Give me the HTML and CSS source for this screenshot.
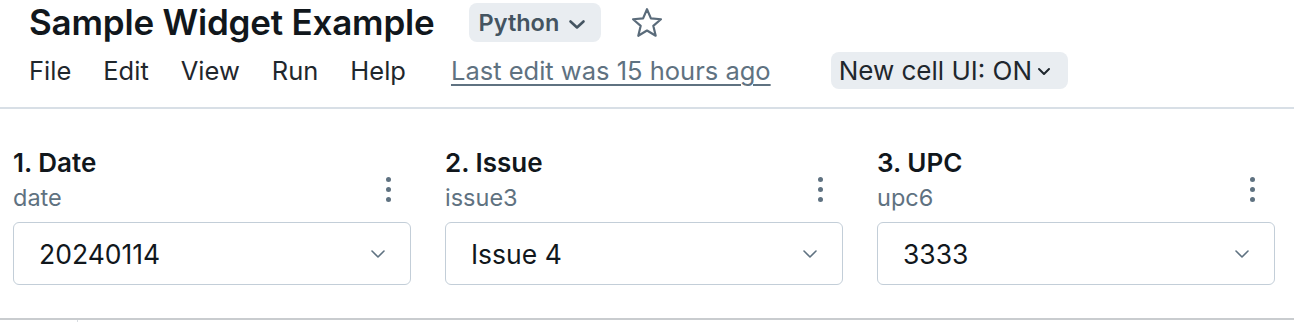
FILE: index.html
```html
<!DOCTYPE html>
<html lang="en">
<head>
<meta charset="utf-8">
<title>Sample Widget Example</title>
<link rel="stylesheet" href="styles.css">
</head>
<body>
<header class="header">
  <div class="title-row">
    <h1 class="title">Sample Widget Example</h1>
    <button class="lang-pill">Python
      <svg class="pill-chev" viewBox="0 0 18 11" width="18" height="11"><path d="M2.5 2.5 L9 8.5 L15.5 2.5" fill="none" stroke="currentColor" stroke-width="2.6" stroke-linecap="round" stroke-linejoin="round"/></svg>
    </button>
    <svg class="star" viewBox="0 0 24 24" width="36" height="36"><path d="M12 2.8 L14.6 8.9 L21.3 9.5 L16.2 13.9 L17.8 20.5 L12 17 L6.2 20.5 L7.8 13.9 L2.7 9.5 L9.4 8.9 Z" fill="none" stroke="currentColor" stroke-width="1.45" stroke-linejoin="round"/></svg>
  </div>
  <div class="menu-row">
    <nav class="menu">
      <span>File</span><span>Edit</span><span>View</span><span>Run</span><span>Help</span>
    </nav>
    <a class="last-edit" href="#">Last edit was 15 hours ago</a>
    <button class="cell-pill">New cell UI: ON
      <svg class="cell-chev" viewBox="0 0 14 9" width="14" height="9"><path d="M2 2 L7 7 L12 2" fill="none" stroke="currentColor" stroke-width="2" stroke-linecap="round" stroke-linejoin="round"/></svg>
    </button>
  </div>
</header>
<section class="widgets">
  <div class="widget">
    <div class="widget-head">
      <div class="widget-labels">
        <div class="widget-title">1. Date</div>
        <div class="widget-name">date</div>
      </div>
      <span class="kebab"><i></i><i></i><i></i></span>
    </div>
    <div class="select"><span>20240114</span>
      <svg class="sel-chev" viewBox="0 0 16 10" width="16" height="10"><path d="M2 2 L8 8 L14 2" fill="none" stroke="currentColor" stroke-width="1.6" stroke-linecap="round" stroke-linejoin="round"/></svg>
    </div>
  </div>
  <div class="widget">
    <div class="widget-head">
      <div class="widget-labels">
        <div class="widget-title">2. Issue</div>
        <div class="widget-name">issue3</div>
      </div>
      <span class="kebab"><i></i><i></i><i></i></span>
    </div>
    <div class="select"><span>Issue 4</span>
      <svg class="sel-chev" viewBox="0 0 16 10" width="16" height="10"><path d="M2 2 L8 8 L14 2" fill="none" stroke="currentColor" stroke-width="1.6" stroke-linecap="round" stroke-linejoin="round"/></svg>
    </div>
  </div>
  <div class="widget">
    <div class="widget-head">
      <div class="widget-labels">
        <div class="widget-title">3. UPC</div>
        <div class="widget-name">upc6</div>
      </div>
      <span class="kebab"><i></i><i></i><i></i></span>
    </div>
    <div class="select"><span>3333</span>
      <svg class="sel-chev" viewBox="0 0 16 10" width="16" height="10"><path d="M2 2 L8 8 L14 2" fill="none" stroke="currentColor" stroke-width="1.6" stroke-linecap="round" stroke-linejoin="round"/></svg>
    </div>
  </div>
</section>
<div class="footer-line"><span class="tick"></span></div>
</body>
</html>
```
FILE: styles.css
```css
* { box-sizing: border-box; }
html, body { margin: 0; padding: 0; background: #fff; }
body {
  font-family: Inter, "Liberation Sans", Arial, sans-serif;
  color: #11171c;
  width: 1294px;
  height: 322px;
  overflow: hidden;
}
.header {
  padding: 3px 0 0 29px;
  height: 109px;
  border-bottom: 2px solid #d8dfe6;
}
.title-row {
  display: flex;
  align-items: center;
  height: 39px;
}
.title {
  margin: 0;
  font-size: 35px;
  line-height: 39px;
  font-weight: 600;
  letter-spacing: -0.2px;
  color: #11171c;
}
.lang-pill {
  margin-left: 34px;
  height: 39px;
  width: 132px;
  border: 0;
  border-radius: 8px;
  background: #e9edf1;
  color: #445461;
  font-family: inherit;
  font-size: 23.5px;
  font-weight: 600;
  display: flex;
  align-items: center;
  gap: 9px;
  padding: 0 0 0 10px;
}
.pill-chev { margin-top: 3px; }
.star { margin-left: 28px; color: #5a6b7a; }
.menu-row {
  display: flex;
  align-items: center;
  height: 37px;
  margin-top: 10px;
}
.menu { display: flex; gap: 32px; font-size: 25.5px; color: #1f272d; }
.last-edit {
  margin-left: 45px;
  font-size: 25.5px;
  color: #5f7281;
  text-decoration: underline;
  text-underline-offset: 4px;
  text-decoration-thickness: 1.5px;
}
.cell-pill {
  margin-left: 60px;
  height: 37px;
  width: 237px;
  border: 0;
  border-radius: 8px;
  background: #e9edf1;
  color: #1f272d;
  font-family: inherit;
  font-size: 26px;
  display: flex;
  align-items: center;
  gap: 5px;
  padding: 0 0 0 8px;
}
.cell-chev { margin-top: 2px; }
.widgets {
  display: grid;
  grid-template-columns: repeat(3, 398px);
  column-gap: 34px;
  padding: 39px 0 0 13px;
  height: 209px;
}
.widget-head {
  display: flex;
  justify-content: space-between;
  align-items: flex-start;
  height: 74px;
}
.widget-title { font-size: 26px; font-weight: 600; line-height: 30px; color: #11171c; }
.widget-name { font-size: 23.5px; line-height: 30px; color: #5f7281; margin-top: 5px; }
.kebab {
  display: flex;
  flex-direction: column;
  gap: 5px;
  margin: 29px 20px 0 0;
}
.kebab i { display: block; width: 5px; height: 5px; border-radius: 50%; background: #5f7281; }
.select {
  height: 63px;
  border: 1.5px solid #c3ced8;
  border-radius: 6px;
  display: flex;
  align-items: center;
  justify-content: space-between;
  padding: 0 24px 0 25px;
  font-size: 26.5px;
  color: #11171c;
}
.sel-chev { color: #5f7281; }
.footer-line {
  border-top: 2px solid #c9cccf;
  position: relative;
  height: 4px;
}
.tick {
  position: absolute;
  left: 77px;
  top: 0;
  width: 1px;
  height: 4px;
  background: #d8dde2;
}
```
